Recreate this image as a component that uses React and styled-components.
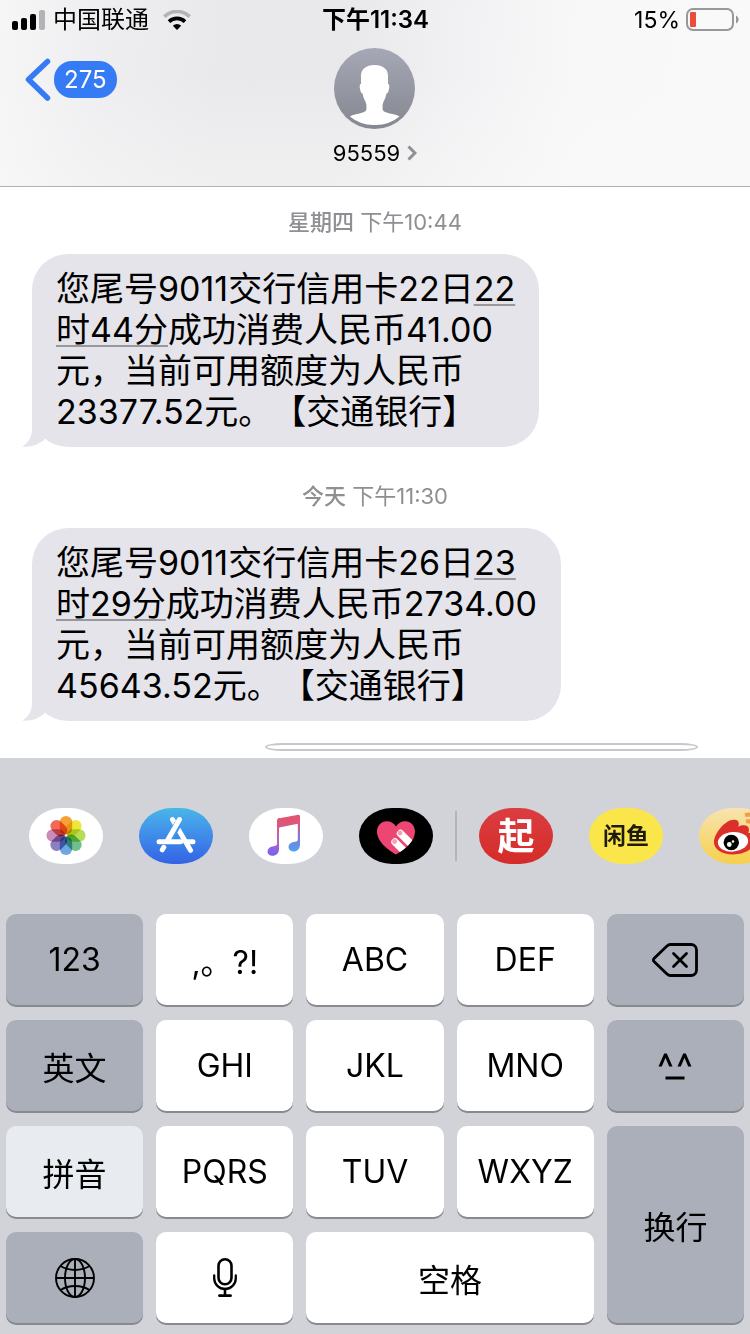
import React from 'react';
import styled, { createGlobalStyle } from 'styled-components';

const GlobalStyle = createGlobalStyle`
  body {
    margin: 0;
    background: #ffffff;
    color: #000000;
    font-family: Inter, 'Noto Sans CJK SC', sans-serif;
    text-spacing-trim: space-all;
  }

  button,
  input {
    font-family: inherit;
    color: inherit;
  }
`;

const Page = styled.div`
  display: flex;
  flex-direction: column;
  min-height: 100vh;
`;

const Header = styled.header`
  border-bottom: 1px solid #b2b2b5;
  padding-bottom: 17px;
  background:
    linear-gradient(180deg, rgba(250, 250, 250, 0) 40%, rgba(250, 250, 250, 0.4) 100%),
    linear-gradient(
      95deg,
      #f6f6f7 0%,
      #eeeef0 14%,
      #e9e9eb 30%,
      #e9e9eb 46%,
      #f1f1f3 60%,
      #f8f8f9 76%,
      #f9f9f9 100%
    );
`;

const StatusBar = styled.div`
  display: grid;
  grid-template-columns: 1fr auto 1fr;
  align-items: center;
  height: 40px;
  padding: 0 11px 0 12px;
  font-size: 24px;
  line-height: 40px;
`;

const StatusGroup = styled.div`
  display: flex;
  align-items: center;
  justify-content: ${(props) => props.$align || 'flex-start'};
  gap: ${(props) => props.$gap || '8px'};
`;

const StatusText = styled.span`
  font-size: ${(props) => props.$size || '24px'};
`;

const Clock = styled.span`
  font-size: 24px;
  font-weight: 600;
`;

const NavBar = styled.nav`
  display: grid;
  grid-template-columns: 1fr auto 1fr;
  align-items: start;
  padding: 8px 24px 0;
`;

const BackButton = styled.button`
  display: flex;
  align-items: center;
  justify-self: start;
  gap: 2px;
  margin-top: 10px;
  padding: 0;
  border: 0;
  background: none;
`;

const UnreadBadge = styled.span`
  padding: 0 10px;
  border-radius: 18px;
  background: #367bf6;
  color: #ffffff;
  font-size: 24px;
  line-height: 37px;
`;

const ContactButton = styled.button`
  display: flex;
  flex-direction: column;
  align-items: center;
  gap: 8px;
  padding: 0;
  border: 0;
  background: none;
`;

const ContactName = styled.span`
  display: flex;
  align-items: center;
  gap: 7px;
  font-size: 22px;
  line-height: 32px;
`;

const Conversation = styled.main`
  display: flex;
  flex: 1;
  flex-direction: column;
  align-items: flex-start;
  padding-top: 3px;
`;

const Timestamp = styled.p`
  align-self: stretch;
  margin: 16px 0;
  color: #8e8e93;
  font-size: 22px;
  line-height: 32px;
  text-align: center;
`;

const Day = styled.span`
  font-weight: 500;
`;

const Bubble = styled.div`
  position: relative;
  margin: 0 32px 17px;
  padding: 14px 24px 15px;
  border-radius: 36px;
  background: #e5e4ea;
`;

const BubbleTail = styled.svg`
  position: absolute;
  bottom: 0;
  left: -10px;
`;

const Line = styled.span`
  display: block;
  font-size: 34px;
  line-height: 41px;
`;

const DateLink = styled.a`
  color: inherit;
  text-decoration: underline;
  text-decoration-color: #98979c;
  text-decoration-thickness: 2px;
  text-underline-offset: 3px;
  text-decoration-skip-ink: none;
`;

const MessageInput = styled.input`
  align-self: stretch;
  height: 8px;
  margin: 5px 52px 7px 265px;
  padding: 0;
  box-sizing: border-box;
  border: 2px solid #c6c7cb;
  border-radius: 18px / 4px;
  background: #ffffff;
`;

const Keyboard = styled.section`
  background: #d1d3d9;
`;

const AppStrip = styled.div`
  display: flex;
  align-items: center;
  gap: 22px;
  padding: 50px 0 50px 29px;
  overflow: hidden;
`;

const AppGroup = styled.div`
  display: flex;
  flex-shrink: 0;
  gap: 36px;
`;

const StripDivider = styled.div`
  flex-shrink: 0;
  width: 2px;
  height: 50px;
  background: #b2b4b9;
`;

const AppButton = styled.button`
  display: flex;
  flex-shrink: 0;
  align-items: center;
  justify-content: center;
  width: 74px;
  height: 56px;
  padding: 0;
  border: 0;
  border-radius: 33px / 28px;
  overflow: hidden;
  background: ${(props) => props.$bg};
  color: ${(props) => props.$color || '#000000'};
  font-size: ${(props) => props.$size || '22px'};
  font-weight: 700;
  line-height: 1;
`;

const KeyGrid = styled.div`
  display: grid;
  grid-template-columns: repeat(5, 1fr);
  grid-auto-rows: 91px;
  gap: 15px 13px;
  padding: 0 6px 11px;
`;

const keyColors = {
  letter: '#ffffff',
  dark: '#abafba',
  active: '#e8ebf0',
};

const Key = styled.button`
  display: flex;
  align-items: center;
  justify-content: center;
  grid-column: span ${(props) => props.$cols || 1};
  grid-row: span ${(props) => props.$rows || 1};
  padding: 0;
  border: 0;
  border-radius: 10px;
  background: ${(props) => keyColors[props.$tone || 'letter']};
  box-shadow: 0 2px 0 #878a90;
  font-size: 32px;
`;

const SignalIcon = () => (
  <svg width="33" height="20" viewBox="0 0 33 20" aria-hidden="true">
    <rect x="0" y="11" width="6" height="9" rx="2" />
    <rect x="9" y="8" width="6" height="12" rx="2" />
    <rect x="18" y="4" width="6" height="16" rx="2" />
    <rect x="27" y="0" width="6" height="20" rx="2" fill="#b4b4b6" />
  </svg>
);

const WifiIcon = () => (
  <svg width="40" height="20" viewBox="-6 0 40 20" fill="none" aria-hidden="true">
    <path d="M1.3 6.6a18 18 0 0 1 25.4 0" stroke="#b4b4b6" strokeWidth="3.6" />
    <path d="M6 11.6a11.5 11.5 0 0 1 16 0" stroke="#000000" strokeWidth="3.6" />
    <path d="M14 20l-4.2-4.3a6.2 6.2 0 0 1 8.4 0z" fill="#000000" />
  </svg>
);

const BatteryIcon = () => (
  <svg width="53" height="24" viewBox="0 0 53 24" aria-hidden="true">
    <rect x="1" y="1" width="46" height="21" rx="6" fill="none" stroke="#98989a" strokeWidth="2" />
    <path d="M50 7.5c3.4 1.4 3.4 6.6 0 8z" fill="#98989a" />
    <rect x="4" y="4" width="6" height="15" rx="1" fill="#eb4d3d" />
  </svg>
);

const BackIcon = () => (
  <svg width="28" height="43" viewBox="0 0 28 43" fill="none" aria-hidden="true">
    <path
      d="M23.5 3.5l-19 18 19 18.5"
      stroke="#367bf6"
      strokeWidth="5.5"
      strokeLinecap="round"
      strokeLinejoin="round"
    />
  </svg>
);

const AvatarIcon = () => (
  <svg width="81" height="81" viewBox="0 0 81 81" aria-hidden="true">
    <defs>
      <linearGradient id="avatar" x1="0" y1="0" x2="0" y2="1">
        <stop offset="0" stopColor="#a5a8b5" />
        <stop offset="1" stopColor="#858890" />
      </linearGradient>
    </defs>
    <circle cx="40.5" cy="40.5" r="40.5" fill="url(#avatar)" />
    <path
      d="M40.5 17C32 17 27 21 27 28v8c-1.400 0-1.600 2-1 5 .5 2.800 1.200 4.300 2.600 4.600.5 3.400 1.600 5.800 2.800 7.800l1 3v4.600c0 3-5 4-9.500 5.100-2.600.6-5.500 1.400-7 2.400A37.500 37.500 0 0 0 40.500 77 37.500 37.500 0 0 0 65.500 68.500c-1.500-1-4.400-1.800-7-2.400C54 65 48.600 64 48.600 61v-4.600l1-3c1.200-2 2.300-4.400 2.800-7.800 1.400-.3 2.100-1.800 2.600-4.600.6-3 .4-5-1-5v-8c0-7-5-11-13.500-11z"
      fill="#ffffff"
    />
  </svg>
);

const DetailIcon = () => (
  <svg width="10" height="16" viewBox="0 0 10 16" fill="none" aria-hidden="true">
    <path d="M1.5 1.5L8 8l-6.500 6.500" stroke="#8e8e93" strokeWidth="3" />
  </svg>
);

const petals = [
  '#f5a338',
  '#efe63c',
  '#b6dc58',
  '#6fc08c',
  '#6ea8e2',
  '#8c80c0',
  '#c98cba',
  '#f06a58',
];

const PhotosIcon = () => (
  <svg width="74" height="56" viewBox="0 0 74 56" aria-hidden="true">
    <g transform="translate(37 27.5)">
      {petals.map((color, index) => (
        <rect
          key={color}
          x="-6.2"
          y="-19.5"
          width="12.4"
          height="18.5"
          rx="6.2"
          fill={color}
          transform={`rotate(${index * 45})`}
          style={{ mixBlendMode: 'multiply' }}
        />
      ))}
    </g>
  </svg>
);

const StoreIcon = () => (
  <svg
    width="74"
    height="56"
    viewBox="0 0 74 56"
    fill="none"
    stroke="#ffffff"
    strokeWidth="5"
    strokeLinecap="round"
    aria-hidden="true"
  >
    <path d="M33.5 11.500l18 30.800" />
    <path d="M39.5 15L28 34.500" stroke="#3f97ee" strokeWidth="7.5" strokeLinecap="butt" />
    <path d="M40.500 11.500L28.500 32.500" />
    <path d="M24.800 39.300l-1.500 2.500" />
    <path d="M20 33.800h21.500M48 33.800h6" />
  </svg>
);

const MusicIcon = () => (
  <svg width="74" height="56" viewBox="0 0 74 56" aria-hidden="true">
    <defs>
      <linearGradient id="noteLeft" x1="0" y1="0" x2="0" y2="1">
        <stop offset="0.2" stopColor="#e25572" />
        <stop offset="0.6" stopColor="#b667c2" />
        <stop offset="1" stopColor="#7461f4" />
      </linearGradient>
      <linearGradient id="noteRight" x1="0" y1="0" x2="0" y2="1">
        <stop offset="0.2" stopColor="#e25572" />
        <stop offset="0.6" stopColor="#8378d4" />
        <stop offset="1" stopColor="#4aa3f2" />
      </linearGradient>
    </defs>
    <path
      d="M28 12.500q0-1.800 1.800-2.200l1.200-.3v9l-1 .5V41c0 4.500-3 6.800-6.500 6.800-3.300 0-5-2-5-4.300 0-2.800 2-4.600 5-5.100l3-.6q1.500-.4 1.500-2z"
      fill="url(#noteLeft)"
    />
    <path
      d="M51 8.200V36.500c0 4.500-3 7-6.500 7-3.300 0-5-2-5-4.400 0-2.800 2-4.500 5-5.100l3-.6q1.300-.4 1.300-2V15.800L29 19.800v-9.400L49.400 6.700q1.600-.2 1.600 1.500z"
      fill="url(#noteRight)"
    />
  </svg>
);

const heartPath =
  'M37 46.500C30 42.500 18 34 18 23.500c0-6 4.300-10.300 9.800-10.300 4 0 7.300 2 9.200 5.300 1.900-3.300 5.200-5.300 9.200-5.300 5.500 0 9.800 4.300 9.800 10.300C56 34 44 42.500 37 46.500z';

const HeartIcon = () => (
  <svg width="74" height="56" viewBox="0 0 74 56" aria-hidden="true">
    <defs>
      <clipPath id="heart">
        <path d={heartPath} />
      </clipPath>
    </defs>
    <path d={heartPath} fill="#ee4672" />
    <g clipPath="url(#heart)">
      <path
        d="M41.500 25.500l16 16M36 34l16 16"
        stroke="#ffffff"
        strokeWidth="7.4"
        strokeLinecap="round"
      />
    </g>
    <circle cx="41" cy="25" r="2.4" fill="#f4a0b4" />
    <circle cx="35.600" cy="33.500" r="2.4" fill="#f4a0b4" />
  </svg>
);

const WeiboIcon = () => (
  <svg width="74" height="56" viewBox="0 0 74 56" aria-hidden="true">
    <path
      d="M37 12c3 .8 3.300 3.600 2.300 6.700 4-1.900 9.700-2.200 10.500 2 .3 1.500 0 2.800-.5 4 4 1.200 6.500 4 6.500 7.800 0 8-10 14-22 14-11 0-18.800-5-18.800-12.500C15 25 28 9.500 37 12z"
      fill="#dc2f2a"
    />
    <ellipse cx="34" cy="33.800" rx="15.200" ry="9.800" transform="rotate(-5 34 33.800)" fill="#ffffff" />
    <circle cx="32.300" cy="34.500" r="7.700" fill="#000000" />
    <circle cx="30.300" cy="36.500" r="2.400" fill="#ffffff" />
    <circle cx="34" cy="33.500" r="1.200" fill="#ffffff" />
    <path
      d="M46 7c10-2 17 5 15 15M47 13.500c5-1 9 2.500 8 7.500"
      fill="none"
      stroke="#f0a04b"
      strokeWidth="4"
    />
  </svg>
);

const DeleteIcon = () => (
  <svg
    width="46"
    height="34"
    viewBox="0 0 46 34"
    fill="none"
    stroke="#000000"
    strokeLinecap="round"
    strokeLinejoin="round"
    strokeWidth="2.8"
    aria-hidden="true"
  >
    <path d="M18.500 1.500H39a5.500 5.500 0 0 1 5.500 5.500v20a5.500 5.500 0 0 1-5.500 5.500H18.500q-2 0-3.500-1.500L2 18.500q-1.200-1.500 0-3L15 3q1.500-1.500 3.500-1.500z" />
    <path d="M21.500 10.500l13 13M34.500 10.500l-13 13" />
  </svg>
);

const FaceIcon = () => (
  <svg width="34" height="28" viewBox="0 0 34 28" aria-hidden="true">
    <path d="M0.500 14.500L6.200 1.500h2.600l5.700 13h-3.300L7.500 5.800l-3.700 8.700zM19.500 14.500l5.700-13h2.600l5.700 13h-3.300l-3.700-8.700-3.700 8.700z" />
    <path d="M7.500 24.500h19v3h-19z" />
  </svg>
);

const GlobeIcon = () => (
  <svg
    width="40"
    height="40"
    viewBox="0 0 40 40"
    fill="none"
    stroke="#000000"
    strokeWidth="1.9"
    aria-hidden="true"
  >
    <circle cx="20" cy="20" r="19" />
    <ellipse cx="20" cy="20" rx="10" ry="19" />
    <path d="M20 1v38M1 20h38" />
    <path d="M5.500 8c8.500 5.300 20.500 5.300 29 0M5.500 32c8.500-5.300 20.500-5.300 29 0" />
  </svg>
);

const MicIcon = () => (
  <svg
    width="24"
    height="40"
    viewBox="0 0 24 40"
    fill="none"
    stroke="#000000"
    strokeLinecap="round"
    aria-hidden="true"
  >
    <rect x="5.5" y="1.3" width="13" height="25" rx="6.5" strokeWidth="2.6" />
    <path d="M1.200 17.500v2.700a10.800 10.800 0 0 0 21.600 0v-2.700" strokeWidth="2.3" />
    <path d="M12 31v6" strokeWidth="2.6" />
    <path d="M6.500 37.700h11" strokeWidth="2.8" />
  </svg>
);

const messages = [
  {
    day: '星期四',
    time: '下午10:44',
    head: '您尾号9011交行信用卡22日',
    dateStart: '22',
    dateEnd: '时44分',
    amount: '成功消费人民币41.00',
    limit: '元，当前可用额度为人民币',
    tail: '23377.52元。【交通银行】',
  },
  {
    day: '今天',
    time: '下午11:30',
    head: '您尾号9011交行信用卡26日',
    dateStart: '23',
    dateEnd: '时29分',
    amount: '成功消费人民币2734.00',
    limit: '元，当前可用额度为人民币',
    tail: '45643.52元。【交通银行】',
  },
];

const keys = [
  { label: '123', tone: 'dark' },
  { label: ',。?!' },
  { label: 'ABC' },
  { label: 'DEF' },
  { name: '删除', icon: <DeleteIcon />, tone: 'dark' },
  { label: '英文', tone: 'dark' },
  { label: 'GHI' },
  { label: 'JKL' },
  { label: 'MNO' },
  { name: '表情', icon: <FaceIcon />, tone: 'dark' },
  { label: '拼音', tone: 'active' },
  { label: 'PQRS' },
  { label: 'TUV' },
  { label: 'WXYZ' },
  { label: '换行', tone: 'dark', rows: 2 },
  { name: '切换键盘', icon: <GlobeIcon />, tone: 'dark' },
  { name: '听写', icon: <MicIcon /> },
  { label: '空格', cols: 2 },
];

const Message = ({ message }) => (
  <>
    <Timestamp>
      <Day>{message.day}</Day> {message.time}
    </Timestamp>
    <Bubble>
      <BubbleTail width="40" height="40" viewBox="0 0 40 40" aria-hidden="true">
        <path d="M10 0v22c0 7-3 14-10 17.500 8 .8 16-1.500 22-6.500l8-13z" fill="#e5e4ea" />
      </BubbleTail>
      <Line>
        {message.head}
        <DateLink href="#date">{message.dateStart}</DateLink>
      </Line>
      <Line>
        <DateLink href="#date">{message.dateEnd}</DateLink>
        {message.amount}
      </Line>
      <Line>{message.limit}</Line>
      <Line>{message.tail}</Line>
    </Bubble>
  </>
);

const App = () => {
  return (
    <Page>
      <GlobalStyle />
      <Header>
        <StatusBar>
          <StatusGroup>
            <SignalIcon />
            <StatusText>中国联通</StatusText>
            <WifiIcon />
          </StatusGroup>
          <Clock>下午11:34</Clock>
          <StatusGroup $align="flex-end" $gap="6px">
            <StatusText $size="23px">15%</StatusText>
            <BatteryIcon />
          </StatusGroup>
        </StatusBar>
        <NavBar>
          <BackButton aria-label="返回 275">
            <BackIcon />
            <UnreadBadge>275</UnreadBadge>
          </BackButton>
          <ContactButton>
            <AvatarIcon />
            <ContactName>
              95559
              <DetailIcon />
            </ContactName>
          </ContactButton>
        </NavBar>
      </Header>

      <Conversation>
        {messages.map((message) => (
          <Message key={message.time} message={message} />
        ))}
        <MessageInput type="text" aria-label="信息" />
      </Conversation>

      <Keyboard>
        <AppStrip>
          <AppGroup>
            <AppButton $bg="#ffffff" aria-label="照片">
              <PhotosIcon />
            </AppButton>
            <AppButton $bg="linear-gradient(#4ab5ea, #3462e6)" aria-label="App Store">
              <StoreIcon />
            </AppButton>
            <AppButton $bg="#ffffff" aria-label="音乐">
              <MusicIcon />
            </AppButton>
            <AppButton $bg="#000000" aria-label="Digital Touch">
              <HeartIcon />
            </AppButton>
          </AppGroup>
          <StripDivider />
          <AppGroup>
            <AppButton $bg="linear-gradient(#dc3d42, #d42c28)" $color="#ffffff" $size="37px">
              起
            </AppButton>
            <AppButton $bg="#fae64a" $color="#1f1a0c" $size="23px">
              闲鱼
            </AppButton>
            <AppButton $bg="linear-gradient(#f8e3b0, #f6d04c)" aria-label="微博">
              <WeiboIcon />
            </AppButton>
          </AppGroup>
        </AppStrip>
        <KeyGrid>
          {keys.map((item) => (
            <Key
              key={item.label || item.name}
              $tone={item.tone}
              $rows={item.rows}
              $cols={item.cols}
              aria-label={item.name}
            >
              {item.icon || item.label}
            </Key>
          ))}
        </KeyGrid>
      </Keyboard>
    </Page>
  );
};

export default App;
